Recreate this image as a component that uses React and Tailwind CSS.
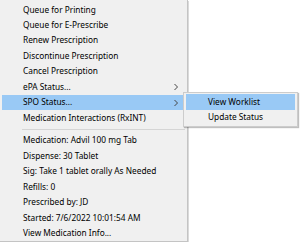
import React from 'react'

const mainItems = [
    { label: 'Queue for Printing' },
    { label: 'Queue for E-Prescribe' },
    { label: 'Renew Prescription' },
    { label: 'Discontinue Prescription' },
    { label: 'Cancel Prescription' },
    { label: 'ePA Status...', sub: true },
    { label: 'SPO Status...', sub: true, active: true },
    { label: 'Medication Interactions (RxINT)' },
]

const infoItems = [
    'Medication: Advil 100 mg Tab',
    'Dispense: 30 Tablet',
    'Sig: Take 1 tablet orally As Needed',
    'Refills: 0',
    'Prescribed by: JD',
    'Started: 7/6/2022 10:01:54 AM',
    'View Medication Info...',
]

const Chevron = () => (
    <svg width="4" height="7" viewBox="0 0 4 7" className="absolute right-[7px] top-1/2 -translate-y-1/2">
        <path d="M0.5 0.5 L3.5 3.5 L0.5 6.5" fill="none" stroke="#444" strokeWidth="1" />
    </svg>
)

const Row = ({ label, sub, active, pad = 'pl-[21px]' }) => (
    <div
        className={`relative h-[15.5px] mx-[2px] flex items-center ${pad} whitespace-nowrap ${active ? 'bg-[#99c9f5]' : ''}`}
    >
        {label}
        {sub && <Chevron />}
    </div>
)

const App = () => {
    return (
        <div
            className="relative w-[300px] h-[242px] bg-white overflow-hidden text-[8.3px] text-black"
            style={{ fontFamily: '"Noto Sans", "Open Sans", sans-serif' }}
        >
            <div className="w-[188px] h-[242px] bg-[#f0f0f0] border-r border-b border-[#c4c4c4] shadow-[1px_1px_0_#dadada] pt-[2px] flex flex-col">
                {mainItems.map((it) => (
                    <Row key={it.label} {...it} />
                ))}
                <div className="h-[7px] flex items-center pl-[22px] pr-[2px]">
                    <div className="h-px w-full bg-[#d5d5d5]" />
                </div>
                {infoItems.map((label) => (
                    <Row key={label} label={label} />
                ))}
            </div>

            <div className="absolute left-[183px] top-[92px] w-[115px] bg-[#f0f0f0] border border-[#cccccc] shadow-[1px_1px_1px_rgba(0,0,0,0.25)] py-px flex flex-col">
                <Row label="View Worklist" active pad="pl-[22px]" />
                <Row label="Update Status" pad="pl-[22px]" />
            </div>
        </div>
    )
}

export default App
